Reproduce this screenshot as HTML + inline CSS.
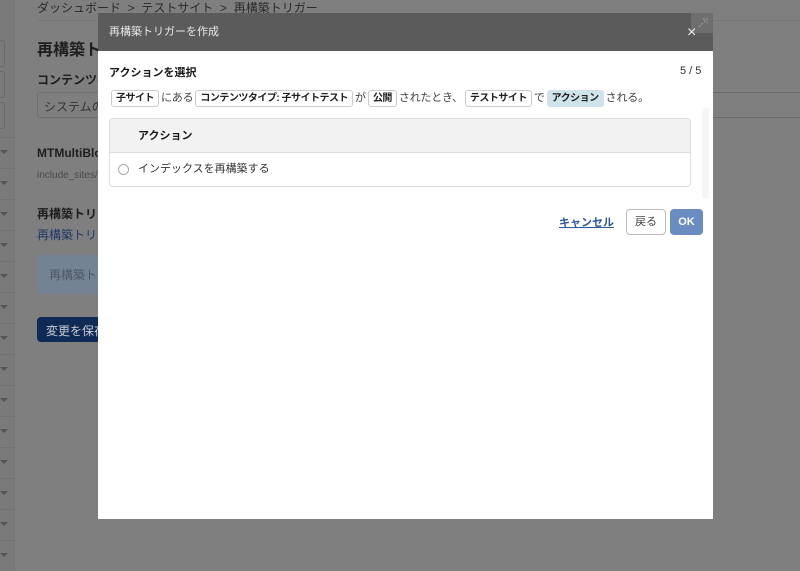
<!DOCTYPE html>
<html><head><meta charset="utf-8"><style>
*{margin:0;padding:0;box-sizing:border-box}
body{width:800px;height:571px;overflow:hidden;background:#7f7f7f;position:relative;font-family:"Liberation Sans","Noto Sans CJK JP",sans-serif;color:#1a1a1a}
.a{position:absolute;white-space:nowrap}
.side{position:absolute;left:0;top:0;width:15px;height:571px;background:#7a7a7a;border-right:1px solid #777}
.sb{position:absolute;left:-4px;width:9px;border:1px solid #6a6a6a;border-radius:3px;height:27px}
.sr{position:absolute;left:0;width:15px;border-top:1px solid #717171;height:31px}
.sr:after{content:"";position:absolute;left:0;top:12px;border-left:4px solid transparent;border-right:4px solid transparent;border-top:4px solid #555;}
.modal{position:absolute;left:98px;top:13px;width:615px;height:506px;background:#fff}
.hd{position:absolute;left:0;top:0;width:615px;height:38px;background:#5b5b5b;color:#e8e8e8;font-size:11px;line-height:38px;padding-left:11px}
.chip{display:inline-block;border:1px solid #ccc;border-radius:3px;font-size:10px;font-weight:bold;padding:0 4px;line-height:15px;color:#222;background:#fff;vertical-align:middle;margin:0 2px;letter-spacing:-0.5px}
.line{font-size:11px;color:#444;letter-spacing:-0.2px}
</style></head><body>
<div class="side">
<div class="sb" style="top:40px"></div><div class="sb" style="top:71px"></div><div class="sb" style="top:102px"></div>
<div class="sr" style="top:137px"></div><div class="sr" style="top:168px"></div><div class="sr" style="top:199px"></div><div class="sr" style="top:230px"></div><div class="sr" style="top:261px"></div><div class="sr" style="top:292px"></div><div class="sr" style="top:323px"></div><div class="sr" style="top:354px"></div><div class="sr" style="top:385px"></div><div class="sr" style="top:416px"></div><div class="sr" style="top:447px"></div><div class="sr" style="top:478px"></div><div class="sr" style="top:509px"></div><div class="sr" style="top:540px"></div>
</div>
<div class="a" style="left:37px;top:-1px;font-size:12px;color:#2a2a2a">ダッシュボード &nbsp;&gt;&nbsp; テストサイト &nbsp;&gt;&nbsp; 再構築トリガー</div>
<div class="a" style="left:37px;top:20px;width:763px;border-top:1px solid #777"></div>
<div class="a" style="left:37px;top:36px;font-size:16px;font-weight:bold;color:#1e1e1e">再構築ト</div>
<div class="a" style="left:37px;top:71px;font-size:12px;font-weight:bold;color:#1e1e1e">コンテンツの</div>
<div class="a" style="left:37px;top:92px;width:80px;height:26px;border:1px solid #707070;border-radius:3px;font-size:12px;color:#333;padding:5px 6px">システムの</div>
<div class="a" style="left:713px;top:92px;width:87px;border-top:1px solid #6a6a6a"></div>
<div class="a" style="left:713px;top:117px;width:87px;border-top:1px solid #6a6a6a"></div>
<div class="a" style="left:37px;top:146px;font-size:12px;font-weight:bold;color:#1e1e1e">MTMultiBlo</div>
<div class="a" style="left:37px;top:170px;font-size:10px;color:#4a4a4a">include_sites/</div>
<div class="a" style="left:37px;top:205px;font-size:12px;font-weight:bold;color:#1e1e1e">再構築トリガ</div>
<div class="a" style="left:37px;top:226px;font-size:12px;color:#1e3a66">再構築トリガ</div>
<div class="a" style="left:37px;top:255px;width:300px;height:39px;background:#748394;border-radius:4px;font-size:12px;color:#4c5866;padding:11px 12px">再構築トリ</div>
<div class="a" style="left:37px;top:317px;width:70px;height:25px;background:#0e2a55;border-radius:4px;font-size:12px;color:#c8ccd4;padding:5px 9px">変更を保存</div>

<div class="modal">
<div class="hd">再構築トリガーを作成</div>
<div class="a" style="left:593px;top:0;width:22px;height:20px;background:#6e6e6e"><svg width="22" height="20"><path d="M8 14 L16 6 M12 6 H16 V10" stroke="#999" stroke-width="1.3" fill="none" stroke-dasharray="2 1.5"/></svg></div>
<div class="a" style="left:589px;top:11px;font-size:16px;color:#eee">×</div>
<div class="a" style="left:11px;top:51px;font-size:11px;font-weight:bold">アクションを選択</div>
<div class="a" style="left:582px;top:52px;font-size:11px;color:#333">5 / 5</div>
<div class="a line" style="left:11px;top:76px"><span class="chip">子サイト</span>にある<span class="chip">コンテンツタイプ: 子サイトテスト</span>が<span class="chip">公開</span>されたとき、<span class="chip">テストサイト</span>で<span class="chip" style="background:#cfe3ea;border-color:#cfe3ea">アクション</span>される。</div>
<div class="a" style="left:604px;top:95px;width:7px;height:90px;background:#f6f6f6"></div>
<div class="a" style="left:11px;top:105px;width:582px;height:69px;border:1px solid #ddd;border-radius:4px;overflow:hidden">
<div style="height:34px;background:#f2f2f2;border-bottom:1px solid #ddd;font-size:11px;font-weight:bold;line-height:34px;padding-left:28px">アクション</div>
<div style="font-size:11px;line-height:33px;padding-left:28px;color:#333;position:relative"><span style="position:absolute;left:8px;top:11px;width:11px;height:11px;border:1px solid #aaa;border-radius:50%"></span>インデックスを再構築する</div>
</div>
<div class="a" style="left:461px;top:201px;font-size:11px;font-weight:bold;color:#2c5a9c;text-decoration:underline">キャンセル</div>
<div class="a" style="left:528px;top:196px;width:40px;height:26px;border:1px solid #bbb;border-radius:4px;font-size:11px;color:#444;text-align:center;line-height:24px">戻る</div>
<div class="a" style="left:572px;top:196px;width:33px;height:26px;background:#6a8cc0;border-radius:4px;font-size:11px;font-weight:bold;color:#fff;text-align:center;line-height:26px">OK</div>
</div>
</body></html>
